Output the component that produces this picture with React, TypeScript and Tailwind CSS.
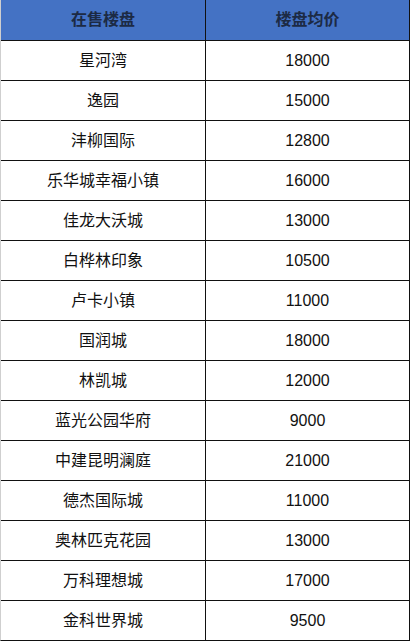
import React from "react";

const rows: [string, string][] = [
  ["星河湾", "18000"],
  ["逸园", "15000"],
  ["沣柳国际", "12800"],
  ["乐华城幸福小镇", "16000"],
  ["佳龙大沃城", "13000"],
  ["白桦林印象", "10500"],
  ["卢卡小镇", "11000"],
  ["国润城", "18000"],
  ["林凯城", "12000"],
  ["蓝光公园华府", "9000"],
  ["中建昆明澜庭", "21000"],
  ["德杰国际城", "11000"],
  ["奥林匹克花园", "13000"],
  ["万科理想城", "17000"],
  ["金科世界城", "9500"],
];

export default function App() {
  return (
    <div
      className="w-[411px] h-[641px] bg-white text-[16px] text-[#111]"
      style={{ fontFamily: '"Liberation Sans", "Noto Sans CJK SC", sans-serif' }}
    >
      <div className="w-[410px] border-l border-l-[#cfcfcf] border-r border-r-[#111] border-b border-b-[#111]">
        <div className="grid grid-cols-[205px_1fr] h-[41px] bg-[#4472c4] border-b border-[#111] font-bold text-[#1c2a44]">
          <div className="flex items-center justify-center border-r border-[#111]">在售楼盘</div>
          <div className="flex items-center justify-center">楼盘均价</div>
        </div>
        {rows.map(([name, price], i) => (
          <div
            key={name}
            className={
              i === rows.length - 1
                ? "grid grid-cols-[205px_1fr] h-[39px]"
                : "grid grid-cols-[205px_1fr] h-[40px] border-b border-[#111]"
            }
          >
            <div className="flex items-center justify-center border-r border-[#111]">{name}</div>
            <div className="flex items-center justify-center">{price}</div>
          </div>
        ))}
      </div>
    </div>
  );
}
